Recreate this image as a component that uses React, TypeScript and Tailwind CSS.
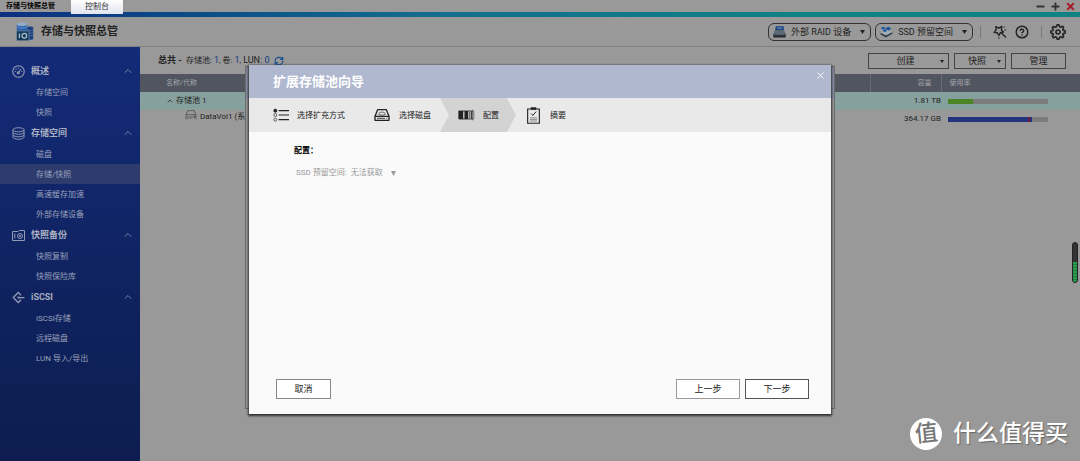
import React from "react";
import { CircleHelp, RefreshCw, ChevronUp, Minus, Plus, X } from "lucide-react";
import { FiSettings } from "react-icons/fi";

type Section = { title: string; icon: React.ReactNode; items: string[] };

const GaugeIcon = () => (
  <svg viewBox="0 0 26 26" className="size-[13px]" fill="none" stroke="currentColor" strokeWidth="2.200">
    <circle cx="13" cy="13" r="11.5" />
    <path d="M13 15 18 8M5.500 13h2M18.500 13h2M13 5v2M7.500 7.500l1.500 1.500" />
    <circle cx="12.500" cy="15.500" r="2" />
  </svg>
);

const DisksIcon = () => (
  <svg viewBox="0 0 26 26" className="size-[13px]" fill="none" stroke="currentColor" strokeWidth="2">
    <ellipse cx="13" cy="5.500" rx="11" ry="4" />
    <path d="M2 5.500v15c0 2.200 5 4 11 4s11-1.800 11-4v-15M2 10.500c0 2.200 5 4 11 4s11-1.800 11-4M2 15.500c0 2.200 5 4 11 4s11-1.800 11-4" />
  </svg>
);

const SnapshotIcon = () => (
  <svg viewBox="0 0 26 22" className="h-[11px] w-[13px]" fill="none" stroke="currentColor" strokeWidth="2">
    <path d="M1 3h11l2-2h11v20H1zM5.500 7v10" />
    <circle cx="16" cy="12" r="5" />
    <circle cx="16" cy="12" r="1.500" />
  </svg>
);

const IscsiIcon = () => (
  <svg viewBox="0 0 26 26" className="size-[13px]" fill="none" stroke="currentColor" strokeWidth="2.500">
    <path d="M18 8.500 12.500 3 2.500 13l10 10 5.500-5.500M13 13h12" />
    <circle cx="13" cy="13" r="1" />
  </svg>
);

const sections: Section[] = [
  { title: "概述", icon: <GaugeIcon />, items: ["存储空间", "快照"] },
  { title: "存储空间", icon: <DisksIcon />, items: ["磁盘", "存储/快照", "高速缓存加速", "外部存储设备"] },
  { title: "快照备份", icon: <SnapshotIcon />, items: ["快照复制", "快照保险库"] },
  { title: "iSCSI", icon: <IscsiIcon />, items: ["iSCSI存储", "远程磁盘", "LUN 导入/导出"] },
];

const AppLogo = () => (
  <svg viewBox="0 0 54 58" className="h-[19px] w-[18px]">
    <path d="M34 17c0-4 18-4 18 0v34c0 4-18 4-18 0z" fill="#1d3f80" />
    <path d="M34 24c4 3 14 3 18 0M34 32c4 3 14 3 18 0M34 40c4 3 14 3 18 0" fill="none" stroke="#6f8fc0" strokeWidth="1.500" />
    <path d="M2 7v20c0 7 32 7 32 0V7z" fill="#2a5fae" />
    <ellipse cx="18" cy="7" rx="16" ry="6" fill="#93a9c4" />
    <path d="M2 14c4 6 28 6 32 0" fill="none" stroke="#8fb0d8" strokeWidth="2" />
    <rect x="1" y="27" width="38" height="30" rx="2" fill="#123a5c" stroke="#9aa6ae" strokeWidth="1.500" />
    <path d="M10 35v14" stroke="#a9b9c4" strokeWidth="4" />
    <circle cx="25" cy="42" r="7" fill="none" stroke="#a9b9c4" strokeWidth="4" />
  </svg>
);

const RaidIcon = () => (
  <svg viewBox="0 0 40 36" className="h-3 w-[13px]">
    <path d="M8 6h24l7 18H1z" fill="#5d6a78" />
    <rect x="8" y="0" width="25" height="12" rx="2" fill="#173f7c" />
    <path d="M12 6h17" stroke="#8ba4c8" strokeWidth="3" />
    <path d="M1 24h38v11H1z" fill="#252c35" />
    <path d="M4 26h32" stroke="#7d8894" strokeWidth="2" />
  </svg>
);

const SsdIcon = () => (
  <svg viewBox="0 0 40 36" className="h-3 w-[13px]">
    <path d="m2 20 16 8 20-11v6L18 35 2 26z" fill="#31404d" />
    <path d="m2 19 17-9 19 8-20 10z" fill="#a2adb5" />
    <path d="m2 6 8-4 7 4-7 5zM15 8l10-6 10 5-9 6zM8 13l8-3 6 4-8 5z" fill="#15549a" />
  </svg>
);

const WandIcon = () => (
  <svg viewBox="0 0 40 40" className="size-[14px]" fill="none" stroke="currentColor" strokeWidth="4" strokeLinejoin="round">
    <path d="m8 5 9 4 8-5-1 10 6 6-9 2-4 8-5-8-9-1 6-7zM24 23l13 13" />
    <path d="M32 4v4M37 14h-4M17 35v4" strokeWidth="3" />
  </svg>
);

const ListIcon = () => (
  <svg viewBox="0 0 48 42" className="h-[14px] w-4 shrink-0" fill="none" stroke="#222" strokeWidth="3">
    <path d="M17 8h31M17 21h31M17 35h31" strokeWidth="3.500" />
    <circle cx="7" cy="8" r="4.500" fill="#222" />
    <circle cx="7" cy="21" r="4.500" strokeWidth="2" />
    <circle cx="7" cy="35" r="4.500" strokeWidth="2" />
  </svg>
);

const DriveIcon = ({ className }: { className: string }) => (
  <svg viewBox="0 0 46 36" className={className} fill="none" stroke="currentColor" strokeWidth="4" strokeLinejoin="round">
    <path d="M10 2h26l8 20v12H2V22zM2 22h42" />
    <path d="M8 28h24M36 28h3" strokeWidth="2.500" />
    <path d="M13 16c0-9 20-9 20 0-3 3-17 3-20 0z" strokeWidth="2" />
  </svg>
);

const VolumeIcon = () => (
  <svg viewBox="0 0 36 32" className="mb-1 h-[10px] w-3 shrink-0" fill="none" stroke="#4a4a4a" strokeWidth="2.500">
    <path d="M2 30V15L8 2h20l6 13v15M2 15h32" />
    <path d="M6 20v8M11 20v8M16 20v8M21 20v8" strokeWidth="2" />
    <path d="M25 20h7l-3.500 6z" fill="#4a4a4a" strokeWidth="1" />
  </svg>
);

const ConfigIcon = () => (
  <svg viewBox="0 0 50 36" className="h-3 w-[17px] shrink-0">
    <path d="M2 6h38v24H2z" fill="none" stroke="#222" strokeWidth="2.500" />
    <path d="M2 6h13v24H2zM19 6h11v24H19z" fill="#222" />
    <path d="M35 8v20" stroke="#444" strokeWidth="3" />
    <path d="M43 2v32M39 6h8v24h-8" fill="none" stroke="#444" strokeWidth="2" />
  </svg>
);

const SummaryIcon = () => (
  <svg viewBox="0 0 40 52" className="h-[17px] w-[13px] shrink-0" fill="none" stroke="#222" strokeWidth="3.500">
    <path d="M2 6h36v44H2z" />
    <path d="M12 1h16v7H12z" fill="#222" strokeWidth="1" />
    <path d="m13 20 5 6 10-12" strokeWidth="3" />
    <path d="M9 33h22M9 38h22M9 43h22" stroke="#777" strokeWidth="2.500" />
  </svg>
);

const Caret = ({ className = "h-1 w-[5px]" }: { className?: string }) => (
  <svg viewBox="0 0 10 8" preserveAspectRatio="none" className={`shrink-0 ${className}`} fill="currentColor">
    <path d="M0 0h10L5 8z" />
  </svg>
);

const Sidebar = () => (
  <nav className="w-[140px] shrink-0 bg-linear-to-b from-[#132b78] to-[#0d1d4f] pt-[13px] text-[#9aa2bb]">
    {sections.map((s) => (
      <section key={s.title}>
        <button className="flex h-[22px] w-full items-center pr-[6px] pl-3 text-[9px] font-bold text-[#a9afc1]">
          <span className="flex w-[19px] items-center text-[#929bb5]">{s.icon}</span>
          {s.title}
          <ChevronUp className="ml-auto size-3 text-[#7380a6]" strokeWidth={2} />
        </button>
        <ul>
          {s.items.map((item) => (
            <li key={item}>
              <a
                href="#"
                className={`flex h-5 items-center pt-px pl-9 text-[8px] ${item === "存储/快照" ? "bg-[#2d3c6d]" : ""}`}
              >
                {item}
              </a>
            </li>
          ))}
        </ul>
      </section>
    ))}
  </nav>
);

const PillButton = ({ icon, children }: { icon: React.ReactNode; children: React.ReactNode }) => (
  <button className="flex h-[18px] items-center gap-[5px] rounded-md border border-[#333] px-1 text-[9px] text-[#222]">
    {icon}
    <span className="pt-px">{children}</span>
    <Caret className="mr-px ml-1 h-1 w-[5px]" />
  </button>
);

const actionButton = "flex h-4 items-center justify-center border border-[#444] pt-px text-[9px] text-[#222]";

const StorageView = () => (
  <main className="min-w-0 flex-1">
    <div className="flex h-[27px] items-center pr-[14px] pl-[18px]">
      <p className="flex items-center text-[8px] whitespace-pre text-[#222]">
        <b className="mr-[2px] text-[9px]">总共 - </b>存储池: <span className="text-[9px] text-[#173a86]">1</span>, 卷:{" "}
        <span className="text-[9px] text-[#173a86]">1</span>, <span className="text-[9px]">LUN: </span>
        <span className="text-[9px] text-[#173a86]">0</span>
        <button aria-label="刷新" className="ml-[5px] text-[#17508f]">
          <RefreshCw className="size-[10px]" strokeWidth={3} />
        </button>
      </p>
      <div className="ml-auto flex gap-[5px]">
        <button className={`${actionButton} w-[81px] pr-1 pl-[2px]`}>
          <span className="flex-1">创建</span>
          <Caret className="h-[3px] w-1" />
        </button>
        <button className={`${actionButton} w-[52px] pr-1 pl-[2px]`}>
          <span className="flex-1">快照</span>
          <Caret className="h-[3px] w-1" />
        </button>
        <button className={`${actionButton} w-[55px]`}>管理</button>
      </div>
    </div>
    <table className="w-full table-fixed text-[8px] text-[#222]">
      <colgroup>
        <col />
        <col className="w-[71px]" />
        <col className="w-[139px]" />
      </colgroup>
      <thead>
        <tr className="h-[18px] bg-[#50555f] text-left text-[7px] text-[#a5a8ad]">
          <th className="pl-[26px] font-normal">名称/代称</th>
          <th className="border-l border-[#666b75] pr-[9px] text-right font-normal">容量</th>
          <th className="border-l border-[#666b75] pl-2 font-normal">使用率</th>
        </tr>
      </thead>
      <tbody>
        <tr className="h-[18px] bg-[#86a09d]">
          <td className="pl-[26px]">
            <button className="flex items-center gap-[2px]">
              <ChevronUp className="size-2 text-[#444]" strokeWidth={3} />
              存储池 1
            </button>
          </td>
          <td className="text-right">1.81 TB</td>
          <td className="pl-[7px]">
            <div className="h-[5px] w-[100px] bg-[#7c7c7c]">
              <div className="h-full w-1/4 bg-[#4c8523]" />
            </div>
          </td>
        </tr>
        <tr className="h-[18px]">
          <td className="pl-[45px]">
            <span className="flex items-center gap-[3px] pb-1 whitespace-nowrap">
              <VolumeIcon />
              <span>DataVol1 (系统)</span>
            </span>
          </td>
          <td className="text-right">364.17 GB</td>
          <td className="pl-[7px]">
            <div className="flex h-[5px] w-[100px] bg-[#7c7c7c]">
              <div className="w-[80%] bg-[#23347c]" />
              <div className="w-[2%] bg-[#7a1840]" />
              <div className="w-[2%] bg-[#23347c]" />
            </div>
          </td>
        </tr>
      </tbody>
    </table>
  </main>
);

const Wizard = () => (
  <div className="absolute inset-0 flex justify-center">
    <div className="absolute top-[66px] bottom-[52px] left-1/2 w-[590px] -translate-x-1/2 border border-[#6c6c6c] bg-[#999]">
      <div className="h-[31px] bg-[#868da5]" />
    </div>
    <div
      role="dialog"
      aria-labelledby="wizard-title"
      className="relative mt-[65px] mb-[47px] flex w-full max-w-[582px] flex-col bg-[#fafafa] shadow-[0_1px_2px_1px_#333]"
    >
      <header className="flex h-[33px] shrink-0 items-center bg-[#b0b8d0] pr-[5px] pl-6">
        <h1 id="wizard-title" className="text-[13px] leading-4 font-bold text-white">
          扩展存储池向导
        </h1>
        <button aria-label="关闭" className="mb-3 ml-auto text-white">
          <X className="size-[11px]" strokeWidth={2} />
        </button>
      </header>
      <ol className="flex h-[34px] shrink-0 items-stretch bg-[#e9e9e9] text-[8px] whitespace-nowrap text-[#222]">
        <li className="flex w-[125px] items-center gap-2 pl-6">
          <ListIcon />
          <span className="pt-px">选择扩充方式</span>
        </li>
        <li className="flex w-[66px] items-center gap-[9px]">
          <DriveIcon className="h-3 w-4 shrink-0 text-[#222]" />
          <span className="pt-px">选择磁盘</span>
        </li>
        <li
          aria-current="step"
          className="flex w-[76px] items-center gap-2 bg-[#d3d3d3] pl-[18px] [clip-path:polygon(0_0,calc(100%-9px)_0,100%_50%,calc(100%-9px)_100%,0_100%,9px_50%)]"
        >
          <ConfigIcon />
          <span className="pt-px">配置</span>
        </li>
        <li className="flex items-center gap-[10px] pl-[11px]">
          <SummaryIcon />
          <span className="pt-px">摘要</span>
        </li>
      </ol>
      <div className="flex-1 px-[45px] pt-[13px]">
        <h2 className="text-[8px] leading-3 font-bold text-black">配置：</h2>
        <div className="mt-[10px] flex items-center pl-[2px] text-[8px] leading-3 text-[#999]">
          <label htmlFor="ssd-op">SSD 预留空间:</label>
          <select id="ssd-op" className="ml-1 w-10 appearance-none bg-transparent">
            <option>无法获取</option>
          </select>
          <Caret className="h-[5px] w-[5px]" />
        </div>
      </div>
      <footer className="flex gap-[5px] pr-[22px] pb-[15px] pl-[27px] text-[9px] text-[#222]">
        <button className="h-5 w-[55px] border border-[#888] bg-white pt-px">取消</button>
        <button className="ml-auto h-5 w-16 border border-[#999] bg-white pt-px">上一步</button>
        <button className="h-5 w-16 border border-[#555] bg-white pt-px">下一步</button>
      </footer>
    </div>
  </div>
);

export default function App() {
  return (
    <div className="relative flex min-h-screen flex-col overflow-hidden bg-[#999] font-[Roboto,'Noto_Sans_CJK_SC',sans-serif] leading-none">
      <div className="flex h-3 items-center pr-1 pl-[6px] text-[7px] text-black">
        <b className="w-[65px]">存储与快照总管</b>
        <button className="relative z-10 h-[14px] w-[52px] self-start bg-linear-to-b from-white to-[#e2e4f0] text-[8px] text-[#333]">
          控制台
        </button>
        <div className="ml-auto flex items-center gap-1 text-[#333]">
          <button aria-label="最小化"><Minus className="size-[11px]" strokeWidth={4} /></button>
          <button aria-label="最大化"><Plus className="size-[11px]" strokeWidth={4} /></button>
          <button aria-label="关闭窗口"><X className="size-[11px] text-[#a8202c]" strokeWidth={4.5} /></button>
        </div>
      </div>
      <div className="h-[5px] bg-linear-to-r from-[#0e2f80] via-[#146d8e] via-40% to-[#108284] to-75%" />
      <header className="flex h-[30px] items-center border-b border-[#808080] pr-[14px] pl-4 text-[#222]">
        <AppLogo />
        <h1 className="ml-[7px] text-[11px] font-bold">存储与快照总管</h1>
        <div className="ml-auto flex items-center">
          <div className="flex gap-1">
            <PillButton icon={<RaidIcon />}>外部 RAID 设备</PillButton>
            <PillButton icon={<SsdIcon />}>SSD 预留空间</PillButton>
          </div>
          <span className="ml-[7px] h-3 w-px bg-[#777]" />
          <button aria-label="向导" className="ml-3"><WandIcon /></button>
          <button aria-label="帮助" className="ml-2"><CircleHelp className="size-[14px]" strokeWidth={2.5} /></button>
          <span className="ml-3 h-3 w-px bg-[#777]" />
          <button aria-label="设置" className="ml-2"><FiSettings className="size-4" strokeWidth={2.4} /></button>
        </div>
      </header>
      <div className="flex flex-1">
        <Sidebar />
        <StorageView />
      </div>
      <Wizard />
      <div className="absolute top-[242px] right-[2px] flex h-[41px] w-[6px] flex-col overflow-hidden rounded-full border border-[#222] bg-[#333]">
        <div className="mt-auto h-5 bg-[repeating-linear-gradient(#2c9a50_0_2px,#1f7a3c_2px_3px)]" />
      </div>
      <div className="absolute right-3 bottom-[11px] flex items-center gap-[11px] text-[23px] leading-8 font-medium text-white [text-shadow:1px_1px_1px_#666]">
        <span className="flex size-8 items-center justify-center rounded-full bg-white text-[#777] [text-shadow:none]">
          <span className="-rotate-6">值</span>
        </span>
        什么值得买
      </div>
    </div>
  );
}
